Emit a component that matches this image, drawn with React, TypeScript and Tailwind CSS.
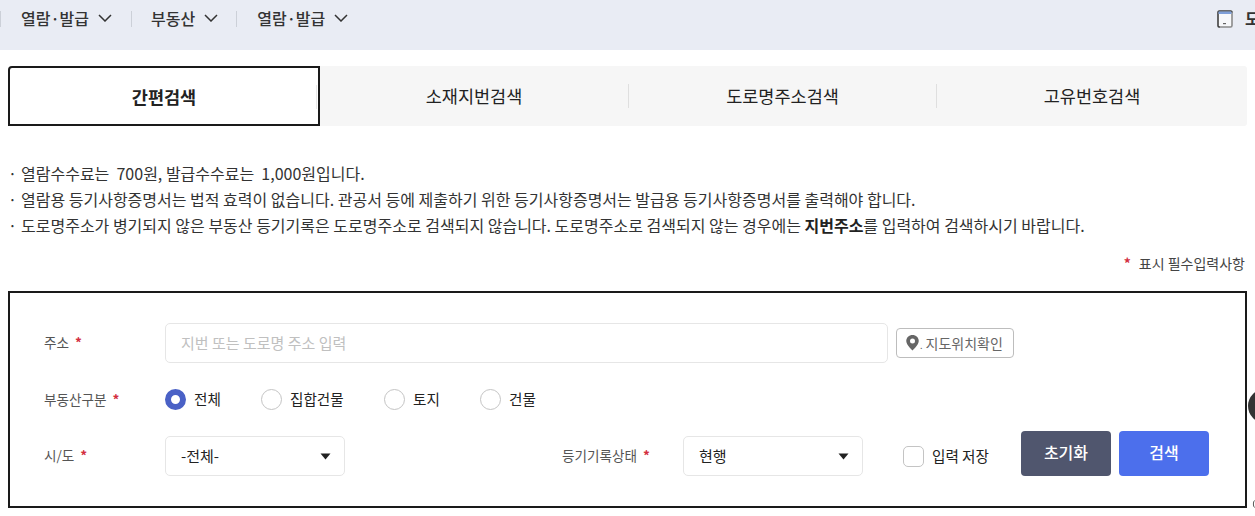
import React from "react";

const font = { fontFamily: '"Noto Sans CJK KR", "Noto Sans", sans-serif' };

function Chev() {
  return (
    <svg width="14" height="8" viewBox="0 0 14 8" fill="none" stroke="#333" strokeWidth="1.5" className="ml-[9px]">
      <path d="M1 1l6 6 6-6" />
    </svg>
  );
}

function Star() {
  return <span className="text-[#d32f3f] font-bold ml-[6px]">*</span>;
}

function Radio({ label, on, className }: { label: string; on?: boolean; className: string }) {
  return (
    <div className={"flex items-center " + className}>
      {on ? (
        <span className="w-[21px] h-[21px] rounded-full border-[6px] border-[#4a61c6] bg-white" />
      ) : (
        <span className="w-[21px] h-[21px] rounded-full border border-[#c4c4c4] bg-white" />
      )}
      <span className="ml-[8px] pb-[1px] text-[14.6px] text-[#222]">{label}</span>
    </div>
  );
}

function Select({ value, className }: { value: string; className: string }) {
  return (
    <div className={"h-[40px] border border-[#e6e6e6] rounded-[5px] flex items-center justify-between pl-[15px] pr-[13px] text-[15px] text-[#222] " + className}>
      <span>{value}</span>
      <svg width="11" height="7" viewBox="0 0 11 7"><path d="M0.500 0.500h10L5.500 6.500z" fill="#222" /></svg>
    </div>
  );
}

export default function App() {
  return (
    <div style={font} className="w-[1255px] h-[516px] overflow-hidden bg-white relative text-[#222]">
      <div className="h-[50px] bg-[#e9ecf4] flex items-start pt-[7px] text-[16px] font-medium text-[#333] relative">
        <span className="w-px h-[16px] bg-[#ccd0d8] mt-[4px]" />
        <div className="flex items-center h-[22px] ml-[20px]"><span>열람·발급</span><Chev /></div>
        <span className="w-px h-[16px] bg-[#ccd0d8] mt-[4px] ml-[19px]" />
        <div className="flex items-center h-[22px] ml-[19px]"><span>부동산</span><Chev /></div>
        <span className="w-px h-[16px] bg-[#ccd0d8] mt-[4px] ml-[18px]" />
        <div className="flex items-center h-[22px] ml-[20px]"><span>열람·발급</span><Chev /></div>
        <div className="ml-auto flex items-center h-[22px]">
          <svg width="16" height="18" viewBox="0 0 16 18" className="mr-[12px] mt-[2px]">
            <rect x="1" y="1" width="14" height="16" rx="1.5" fill="#f7f8fa" stroke="#8a8a8a" strokeWidth="1.6" />
            <path d="M15 2.500V2a1 1 0 00-1-1H2a1 1 0 00-1 1v14a1 1 0 001 1h1" fill="none" stroke="#333" strokeWidth="1.1" />
            <rect x="1.500" y="1.500" width="13" height="2.500" fill="#7f9fd8" />
            <rect x="6" y="13" width="3" height="1.200" fill="#666" />
          </svg>
          <span className="w-[10px] overflow-hidden whitespace-nowrap font-bold">도</span>
        </div>
      </div>

      <div className="mx-[8px] mt-[16px] w-[1239px] h-[60px] bg-[#f6f6f6] rounded-[3px] flex text-[17.5px] text-[#222]">
        <div className="relative w-[312px] h-[60px] border-2 border-[#1a1a1a] rounded-tl-[4px] bg-white flex items-center justify-center font-bold pt-[3px]">
          간편검색
          <span className="absolute right-[1px] top-[17px] w-px h-[24px] bg-[#e8e8e8]" />
        </div>
        <div className="w-[308px] flex items-center justify-center pt-[1px]">소재지번검색</div>
        <span className="w-px h-[24px] bg-[#dfdfdf] self-center" />
        <div className="w-[307px] flex items-center justify-center pt-[1px]">도로명주소검색</div>
        <span className="w-px h-[24px] bg-[#dfdfdf] self-center" />
        <div className="flex-1 flex items-center justify-center pt-[1px]">고유번호검색</div>
      </div>

      <ul className="mt-[34px] ml-[8px] text-[16px] leading-[26px] text-[#333]">
        <li className="flex"><span className="w-[13px]">·</span><span className="whitespace-pre">열람수수료는  700원, 발급수수료는  1,000원입니다.</span></li>
        <li className="flex"><span className="w-[13px]">·</span><span>열람용 등기사항증명서는 법적 효력이 없습니다. 관공서 등에 제출하기 위한 등기사항증명서는 발급용 등기사항증명서를 출력해야 합니다.</span></li>
        <li className="flex"><span className="w-[13px]">·</span><span>도로명주소가 병기되지 않은 부동산 등기기록은 도로명주소로 검색되지 않습니다. 도로명주소로 검색되지 않는 경우에는 <b className="text-[#222]">지번주소</b>를 입력하여 검색하시기 바랍니다.</span></li>
      </ul>

      <div className="mt-[13px] pr-[10px] text-right text-[14px] leading-[24px] text-[#444]"><span className="text-[#d32f3f] font-bold mr-[8px]">*</span>표시 필수입력사항</div>

      <div className="mt-[16px] ml-[8px] w-[1239px] h-[217px] border-2 border-[#1a1a1a] pl-[34px] pt-[30px]">
        <div className="flex items-center h-[40px]">
          <div className="w-[121px] pb-[1px] text-[13.6px] text-[#555]">주소<Star /></div>
          <div className="w-[723px] h-[40px] border border-[#e6e6e6] rounded-[5px] flex items-center pl-[15px] text-[15px] text-[#c0c0c0]">지번 또는 도로명 주소 입력</div>
          <div className="ml-[8px] w-[118px] h-[30px] border border-[#bdbdbd] rounded-[4px] flex items-center pl-[9px] text-[14px] text-[#666]">
            <svg width="13" height="16" viewBox="0 0 13 16"><path fillRule="evenodd" d="M6.500 0C3 0 0.250 2.600 0.250 6c0 4 6.250 9.500 6.250 9.500s6.250-5.500 6.250-9.500C12.750 2.600 10 0 6.500 0zm0 3.500a2.500 2.500 0 110 5 2.500 2.500 0 010-5z" fill="#666" /></svg>
            <span className="ml-[1px] mr-[3px] text-[#666] leading-none self-end mb-[7px] text-[9px]">.</span>
            <span>지도위치확인</span>
          </div>
        </div>
        <div className="flex items-center h-[21px] mt-[26px]">
          <div className="w-[121px] pb-[1px] text-[13.6px] text-[#555]">부동산구분<Star /></div>
          <Radio label="전체" on className="w-[96px]" />
          <Radio label="집합건물" className="w-[123px]" />
          <Radio label="토지" className="w-[96px]" />
          <Radio label="건물" className="w-[96px]" />
        </div>
        <div className="flex items-start mt-[26px]">
          <div className="w-[121px] h-[40px] pb-[1px] flex items-center text-[13.6px] text-[#555]"><span>시/도<Star /></span></div>
          <Select value="-전체-" className="w-[180px]" />
          <div className="w-[338px] h-[40px] pb-[1px] pr-[33px] flex items-center justify-end text-[13.6px] text-[#555]"><span>등기기록상태<Star /></span></div>
          <Select value="현행" className="w-[180px]" />
          <div className="ml-[40px] h-[40px] flex items-center">
            <span className="w-[21px] h-[21px] rounded-[5px] border border-[#c4c4c4]" />
            <span className="ml-[8px] text-[14.6px] text-[#222]">입력 저장</span>
          </div>
          <div className="ml-[32px] -mt-[5px] flex gap-[8px]">
            <div className="w-[90px] h-[45px] rounded-[4px] bg-[#50566e] text-white text-[16px] font-medium flex items-center justify-center pb-[3px]">초기화</div>
            <div className="w-[90px] h-[45px] rounded-[4px] bg-[#4c6fec] text-white text-[16px] font-medium flex items-center justify-center pb-[3px]">검색</div>
          </div>
        </div>
      </div>

      <div className="absolute left-[1248px] top-[389px] w-[34px] h-[34px] rounded-full bg-[#333]" />
      <svg width="3" height="8" viewBox="0 0 3 8" className="absolute left-[1252px] top-[500px]">
        <path d="M2.500 0.500C1 1.500 1 6.500 2.500 7.500" fill="none" stroke="#555" strokeWidth="1" />
      </svg>
    </div>
  );
}
